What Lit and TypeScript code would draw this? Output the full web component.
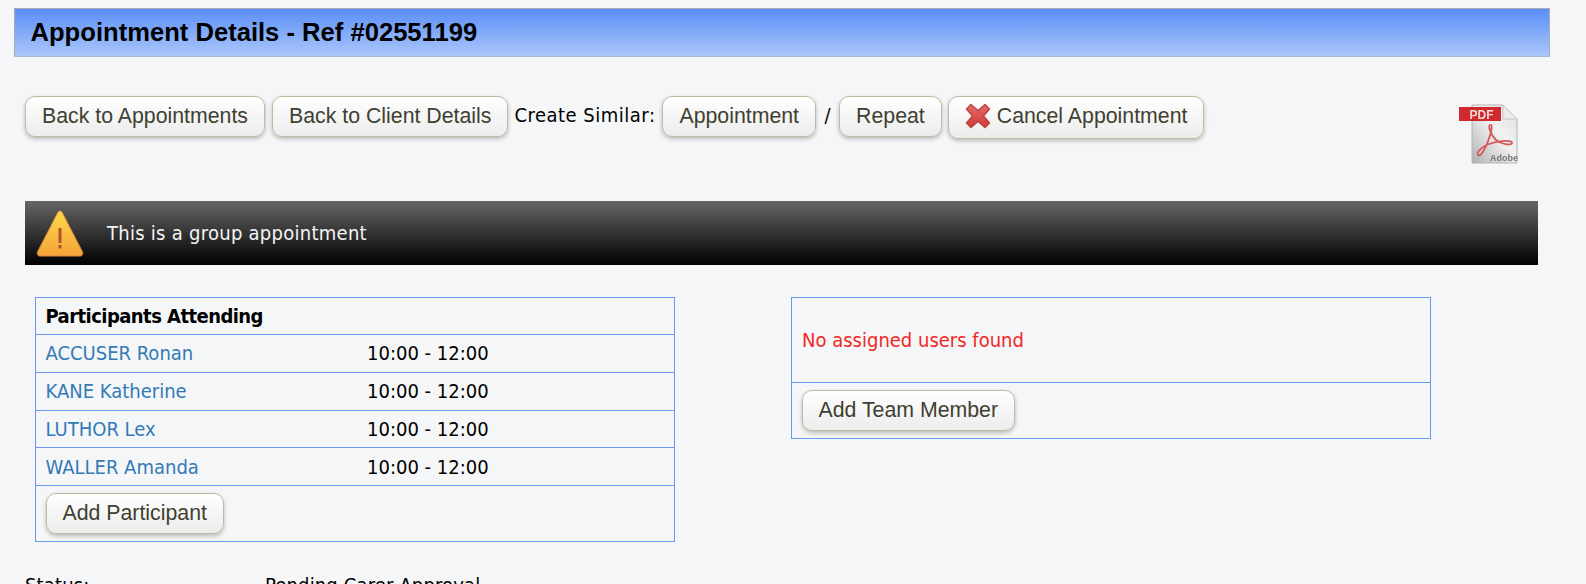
import { LitElement, html, css } from "lit"
import { customElement } from "lit/decorators.js"

const participants = [
  { name: "ACCUSER Ronan", time: "10:00 - 12:00" },
  { name: "KANE Katherine", time: "10:00 - 12:00" },
  { name: "LUTHOR Lex", time: "10:00 - 12:00" },
  { name: "WALLER Amanda", time: "10:00 - 12:00" },
]

@customElement("app-root")
export class AppRoot extends LitElement {
  static styles = css`
    :host {
      display: block;
      height: 584px;
      overflow: hidden;
      background: #f5f6f8;
      font-family: "DejaVu Sans Condensed", "DejaVu Sans", sans-serif;
      font-stretch: condensed;
      font-size: 20px;
      color: #000;
    }

    .title {
      box-sizing: border-box;
      height: 49px;
      margin: 8px 36px 0 14px;
      padding-left: 15.5px;
      display: flex;
      align-items: center;
      border: 1px solid #a9adb3;
      border-bottom-color: #a4b6d4;
      background: linear-gradient(#5a8ef6, #abc7fb);
      font: bold 25.6px "Liberation Sans", sans-serif;
    }

    .toolbar {
      height: 144px;
      margin: 0 48px 0 25px;
      padding-top: 39px;
      box-sizing: border-box;
      display: flex;
      align-items: flex-start;
    }

    .btn {
      box-sizing: border-box;
      height: 41px;
      padding: 0 16px 1px;
      display: inline-flex;
      align-items: center;
      border: 1px solid #bcbc9e;
      border-radius: 10px;
      background: linear-gradient(#ffffff, #ececec);
      box-shadow: 0 2px 4px rgba(0, 0, 0, 0.25);
      font: 21.3px "Liberation Sans", sans-serif;
      font-stretch: normal;
      color: #3f3f30;
      white-space: nowrap;
    }

    .btn.back {
      margin-right: 7px;
    }

    .btn.cancel {
      height: 43px;
      padding: 0 16px 3px 16px;
      margin-left: 6px;
      gap: 6px;
    }

    .label {
      line-height: 38px;
      margin: 0 7px 0 6px;
      letter-spacing: 0.5px;
    }

    .slash {
      line-height: 38px;
      margin: 0 8.5px;
    }

    .pdf {
      margin: 8px 19px 0 auto;
      filter: blur(0.4px);
    }

    .notice {
      box-sizing: border-box;
      height: 64px;
      margin: 0 48px 0 25px;
      padding-left: 11px;
      display: flex;
      align-items: center;
      gap: 23px;
      background: linear-gradient(#666666, #000000);
      color: #f4f4f4;
      letter-spacing: 0.27px;
    }

    .panels {
      display: flex;
      align-items: flex-start;
      margin: 32px 0 0 35px;
    }

    .panel {
      box-sizing: border-box;
      width: 640px;
      border: 1px solid #6f97f2;
    }

    .panel + .panel {
      margin-left: 116px;
    }

    .row {
      box-sizing: border-box;
      height: 37.75px;
      padding-left: 9.5px;
      display: grid;
      grid-template-columns: 321.5px 1fr;
      align-items: center;
      border-bottom: 1px solid #6f97f2;
    }

    .row.head {
      height: 37px;
      font-weight: bold;
      letter-spacing: -0.55px;
    }

    .row a {
      color: #337ab7;
      text-decoration: none;
    }

    .actions {
      height: 55px;
      padding: 7px 0 0 9.5px;
      box-sizing: border-box;
    }

    .actions .btn {
      padding-bottom: 0;
    }

    .empty {
      box-sizing: border-box;
      height: 85px;
      padding-left: 10px;
      display: flex;
      align-items: center;
      border-bottom: 1px solid #6f97f2;
      color: #f1281f;
    }

    .status {
      margin: 31px 0 0 25px;
      display: grid;
      grid-template-columns: 240px 1fr;
      letter-spacing: 0.15px;
    }
  `

  render() {
    return html`
      <div class="title">Appointment Details - Ref #02551199</div>

      <div class="toolbar">
        <span class="btn back">Back to Appointments</span>
        <span class="btn">Back to Client Details</span>
        <span class="label">Create Similar:</span>
        <span class="btn">Appointment</span>
        <span class="slash">/</span>
        <span class="btn">Repeat</span>
        <span class="btn cancel">
          <svg width="26" height="26" viewBox="0 0 26 26">
            <defs>
              <linearGradient id="x" x1="0" y1="0" x2="0" y2="1">
                <stop offset="0" stop-color="#e26c6a" />
                <stop offset="1" stop-color="#cf3b39" />
              </linearGradient>
            </defs>
            <path
              d="M6 1.500 L13 7.500 L20 1.500 L24.500 6 L18.500 13 L24.500 20 L20 24.500 L13 18.500 L6 24.500 L1.500 20 L7.500 13 L1.500 6 Z"
              fill="url(#x)"
              stroke="#bb4543"
              stroke-width="1.500"
              stroke-linejoin="round"
            />
          </svg>
          Cancel Appointment
        </span>
        <svg class="pdf" width="60" height="60" viewBox="0 0 60 60">
          <defs>
            <linearGradient id="page" x1="1" y1="0" x2="0" y2="1">
              <stop offset="0" stop-color="#e0e0e0" />
              <stop offset="0.45" stop-color="#f2f2f2" />
              <stop offset="1" stop-color="#b0b0b0" />
            </linearGradient>
          </defs>
          <path d="M13 1 H44 L58 15 V59 H13 Z" fill="url(#page)" stroke="#b5b5b5" />
          <path d="M44 1 V15 H58 Z" fill="#ececec" stroke="#c4c4c4" />
          <rect x="0" y="3" width="42" height="14" fill="#d12a2d" />
          <text x="10.500" y="14.500" font-family="Liberation Sans" font-size="12" font-weight="bold" fill="#f6d9d9">PDF</text>
          <path
            d="M19 51 C22 54 28 42 32 28 C33 23 33 20 31 21 C29 22 31 30 37 36 C42 40 52 42 53 39 C54 36 40 36 30 40 C24 42 17 48 19 51 Z"
            fill="none"
            stroke="#d6595c"
            stroke-width="1.800"
          />
          <text x="31" y="57" font-family="Liberation Sans" font-size="9" font-weight="bold" fill="#777">Adobe</text>
        </svg>
      </div>

      <div class="notice">
        <svg width="48" height="48" viewBox="0 0 48 48">
          <defs>
            <linearGradient id="warn" x1="0" y1="0" x2="0" y2="1">
              <stop offset="0" stop-color="#fddc4a" />
              <stop offset="1" stop-color="#f4a23a" />
            </linearGradient>
          </defs>
          <path
            d="M24 2 C25.500 2 26 3 27 5 L46 42 C47.500 45 46.500 47 44 47 H4 C1.500 47 0.500 45 2 42 L21 5 C22 3 22.500 2 24 2 Z"
            fill="url(#warn)"
            stroke="#d58b3e"
          />
          <rect x="22.500" y="19" width="3" height="15" fill="#b4532a" />
          <rect x="22.500" y="36" width="3" height="3.500" fill="#b4532a" />
        </svg>
        <span>This is a group appointment</span>
      </div>

      <div class="panels">
        <div class="panel">
          <div class="row head"><span>Participants Attending</span></div>
          ${participants.map(
            (p) => html`<div class="row"><a>${p.name}</a><span>${p.time}</span></div>`,
          )}
          <div class="actions"><span class="btn">Add Participant</span></div>
        </div>
        <div class="panel">
          <div class="empty">No assigned users found</div>
          <div class="actions"><span class="btn">Add Team Member</span></div>
        </div>
      </div>

      <div class="status"><span>Status:</span><span>Pending Carer Approval</span></div>
    `
  }
}
